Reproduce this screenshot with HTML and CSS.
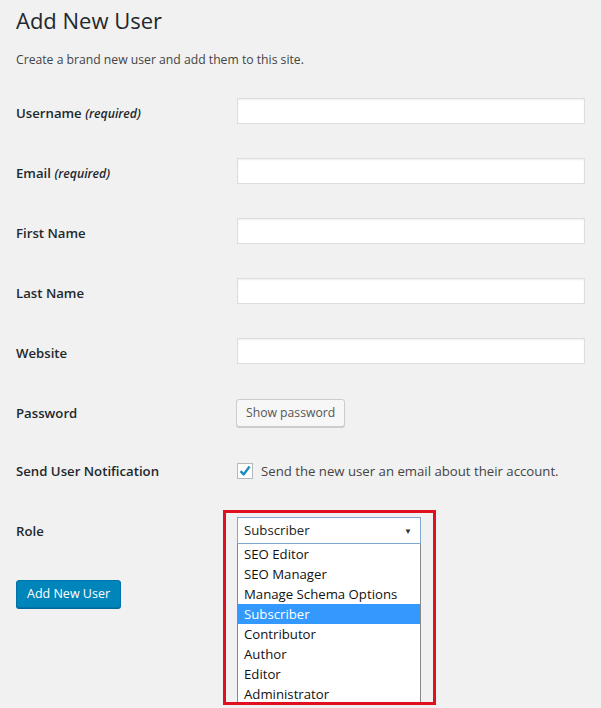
FILE: index.html
```html
<!DOCTYPE html>
<html lang="en">
<head>
    <meta charset="UTF-8">
    <meta name="viewport" content="width=device-width, initial-scale=1.0">
    <title>Add New User</title>
    <link rel="stylesheet" href="styles.css">
</head>
<body>
    <div class="wrap">
        <h1>Add New User</h1>
        <p class="intro">Create a brand new user and add them to this site.</p>

        <form class="user-form">
            <div class="form-row">
                <label for="user_login">Username <span class="req">(required)</span></label>
                <input type="text" id="user_login" class="text-input">
            </div>
            <div class="form-row">
                <label for="email">Email <span class="req">(required)</span></label>
                <input type="text" id="email" class="text-input">
            </div>
            <div class="form-row">
                <label for="first_name">First Name</label>
                <input type="text" id="first_name" class="text-input">
            </div>
            <div class="form-row">
                <label for="last_name">Last Name</label>
                <input type="text" id="last_name" class="text-input">
            </div>
            <div class="form-row">
                <label for="url">Website</label>
                <input type="text" id="url" class="text-input">
            </div>
            <div class="form-row">
                <label>Password</label>
                <button type="button" class="btn-secondary">Show password</button>
            </div>
            <div class="form-row row-notify">
                <label>Send User Notification</label>
                <div class="notify">
                    <span class="checkbox">
                        <svg width="14" height="14" viewBox="0 0 14 14"><path d="M2.5 7.2 L5.6 10.4 L11.6 2.6" fill="none" stroke="#1e8cbe" stroke-width="2.4" stroke-linejoin="round"/></svg>
                    </span>
                    Send the new user an email about their account.
                </div>
            </div>
            <div class="form-row">
                <label>Role</label>
                <div class="role-cell">
                    <div class="select-box">
                        <span>Subscriber</span>
                        <span class="arrow">&#9660;</span>
                    </div>
                    <ul class="role-list">
                        <li>SEO Editor</li>
                        <li>SEO Manager</li>
                        <li>Manage Schema Options</li>
                        <li class="active">Subscriber</li>
                        <li>Contributor</li>
                        <li>Author</li>
                        <li>Editor</li>
                        <li>Administrator</li>
                    </ul>
                    <div class="highlight"></div>
                </div>
            </div>
            <button type="button" class="btn-primary">Add New User</button>
        </form>
    </div>
</body>
</html>
```

FILE: styles.css
```css
html {
    background: #f1f1f1;
}
body {
    margin: 0;
    min-height: 708px;
    background: #f1f1f1;
    font-family: "Open Sans", "Noto Sans", sans-serif;
    color: #444;
    font-size: 13px;
}
.wrap {
    padding: 0 16px;
}
h1 {
    margin: 5px 0 0;
    font-size: 22px;
    font-weight: 400;
    line-height: 30px;
    color: #23282d;
}
.intro {
    margin: 15px 0 0;
    line-height: 20px;
    font-size: 12.2px;
}
.user-form {
    margin-top: 13px;
}
.form-row {
    display: flex;
    align-items: center;
    height: 60px;
}
.row-notify {
    height: 56px;
    margin-bottom: 2px;
}
.form-row label {
    width: 221px;
    flex-shrink: 0;
    font-size: 13.2px;
    font-weight: 600;
    color: #23282d;
}
.req {
    font-style: italic;
    font-weight: 600;
    font-size: 12.3px;
}
.text-input {
    box-sizing: border-box;
    width: 350px;
    height: 26px;
    margin: 0 0 4px;
    border: 1px solid #ddd;
    box-shadow: inset 0 1px 2px rgba(0, 0, 0, 0.07);
    background: #fff;
}
.btn-secondary {
    margin-left: -1px;
    height: 28px;
    padding: 0 9px 2px;
    border: 1px solid #ccc;
    border-radius: 3px;
    background: #f7f7f7;
    box-shadow: 0 1px 0 #ccc;
    color: #555;
    font-family: inherit;
    font-size: 12.2px;
}
.notify {
    display: flex;
    align-items: center;
    gap: 8px;
    font-size: 13.2px;
    color: #444;
}
.checkbox {
    box-sizing: border-box;
    width: 16px;
    height: 16px;
    border: 1px solid #b4b9be;
    background: #fff;
    display: flex;
    align-items: center;
    justify-content: center;
}
.role-cell {
    position: relative;
    width: 184px;
    margin-bottom: 2px;
}
.select-box {
    box-sizing: border-box;
    height: 27px;
    display: flex;
    align-items: center;
    justify-content: space-between;
    padding: 0 8px 0 6px;
    border: 1px solid #7fa7cf;
    background: #fff;
    color: #222;
    font-size: 13.2px;
}
.arrow {
    font-size: 8px;
    color: #333;
}
.role-list {
    position: absolute;
    top: 27px;
    left: 0;
    width: 184px;
    box-sizing: border-box;
    margin: 0;
    padding: 0;
    list-style: none;
    background: #fff;
    border: 1px solid #888;
    border-top: none;
    border-bottom: none;
    font-size: 13.2px;
    color: #111;
    z-index: 1;
}
.role-list li {
    height: 20px;
    line-height: 20px;
    padding-left: 6px;
}
.role-list .active {
    background: #3399ff;
    color: #fff;
}
.highlight {
    position: absolute;
    left: -14px;
    top: -7px;
    width: 213px;
    height: 195px;
    box-sizing: border-box;
    border: 3px solid #e01020;
    z-index: 2;
}
.btn-primary {
    display: block;
    margin-top: 19px;
    height: 28px;
    padding: 0 10px 2px;
    border: 1px solid #0073aa;
    border-radius: 3px;
    background: #0085ba;
    box-shadow: 0 1px 0 #006799;
    color: #fff;
    font-family: inherit;
    font-size: 12.5px;
}
```
